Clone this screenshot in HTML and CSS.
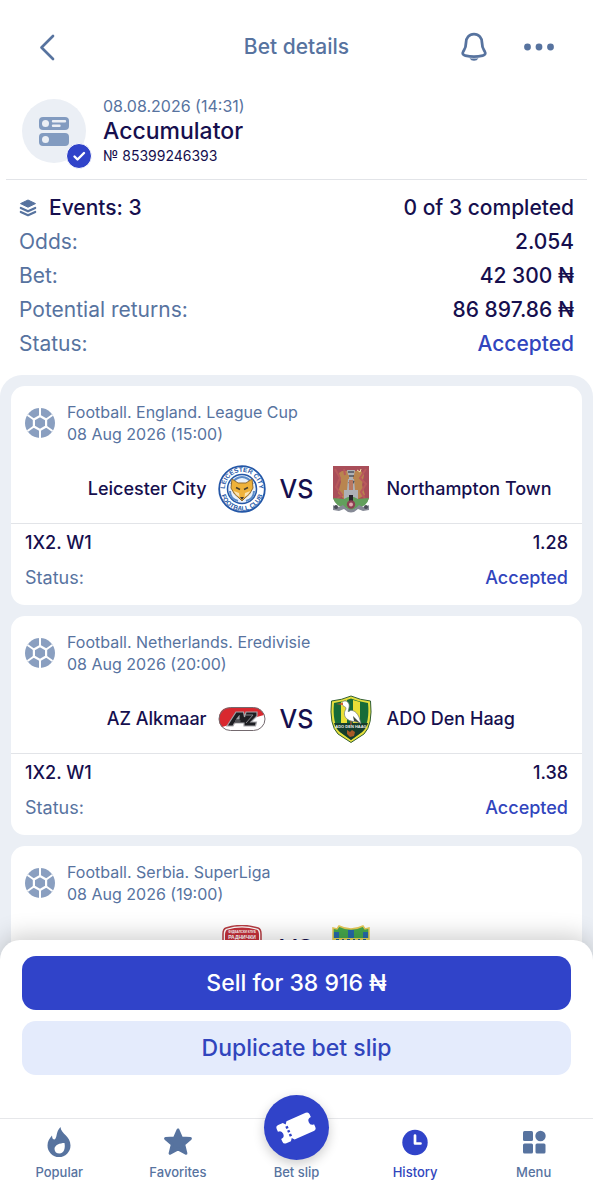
FILE: index.html
```html
<!DOCTYPE html>
<html lang="en">
<head>
<meta charset="utf-8">
<meta name="viewport" content="width=device-width, initial-scale=1">
<title>Bet details</title>
<link rel="stylesheet" href="styles.css">
</head>
<body>
<svg class="defs" aria-hidden="true">
  <symbol id="ball" viewBox="0 0 30 30">
    <circle cx="15" cy="15" r="15" fill="#8a9fc0"/>
    <path d="M15 8 21.100 11.500V18.500L15 22 8.900 18.500V11.500Z" fill="none" stroke="#fff" stroke-width="2.200"/>
    <path d="M15 0V8M15 22V30M21.100 11.500 27.500 7M21.100 18.500 27.500 23M8.900 11.500 2.500 7M8.900 18.500 2.500 23" stroke="#fff" stroke-width="2"/>
  </symbol>
</svg>
<div class="app">
  <header class="topbar">
    <button class="icon-btn" aria-label="Back"><svg width="36" height="36" viewBox="0 0 36 36"><path d="M17 7 5.500 18.500 17 30" fill="none" stroke="#57739f" stroke-width="2.700" stroke-linecap="round" stroke-linejoin="round"/></svg></button>
    <h1 class="title">Bet details</h1>
    <div class="actions">
      <button class="icon-btn" aria-label="Notifications"><svg width="36" height="36" viewBox="0 0 36 36"><path d="M18 5.200c-5 0-8 3.800-8 8.500 0 5-1.200 6.200-2.700 8.700-1.300 2.200-.3 3.700 2 4.200 5.200 1.200 12.200 1.200 17.400 0 2.300-.5 3.300-2 2-4.200-1.500-2.500-2.700-3.700-2.700-8.700 0-4.700-3-8.500-8-8.500Z" fill="none" stroke="#57739f" stroke-width="2.800"/><path d="M13.500 29.200q4.500.7 9 0Q21 31.800 18 31.800T13.500 29.200Z" fill="#57739f"/></svg></button>
      <button class="icon-btn" aria-label="More"><svg width="36" height="36" viewBox="0 0 36 36" fill="#57739f"><circle cx="6.500" cy="18" r="3.400"/><circle cx="18" cy="18" r="3.400"/><circle cx="29.500" cy="18" r="3.400"/></svg></button>
    </div>
  </header>

  <main class="scroll">
    <section class="bet">
      <div class="avatar">
        <svg width="30" height="30" viewBox="0 0 30 30"><rect y="1" width="30" height="13" rx="4" fill="#829bc0"/><rect y="17" width="30" height="13" rx="4" fill="#829bc0"/><circle cx="6.500" cy="7.500" r="3.500" fill="#ebeff5"/><circle cx="6.500" cy="23.500" r="3.500" fill="#ebeff5"/><path d="M14 5.300H26M14 9.700H20.500" stroke="#ebeff5" stroke-width="2.400" stroke-linecap="round"/></svg>
        <svg class="check" width="26" height="26" viewBox="0 0 26 26"><circle cx="13" cy="13" r="12.500" fill="#3043c9" stroke="#fff"/><path d="m8.500 13.500 3 3L18 10" fill="none" stroke="#fff" stroke-width="2.400" stroke-linecap="round" stroke-linejoin="round"/></svg>
      </div>
      <div>
        <p class="bet-date">08.08.2026 (14:31)</p>
        <h2 class="bet-type">Accumulator</h2>
        <p class="bet-no">№ 85399246393</p>
      </div>
    </section>

    <dl class="summary">
      <div class="row"><dt class="events"><svg width="18" height="18" viewBox="0 0 18 18"><path d="M9 1 16.500 4.600 9 8.200 1.500 4.600Z" fill="#57739f" stroke="#57739f" stroke-linejoin="round"/><path d="M1.800 9 9 12.300 16.200 9M1.800 12.900 9 16.200 16.200 12.900" fill="none" stroke="#57739f" stroke-width="2.200" stroke-linecap="round" stroke-linejoin="round"/></svg>Events: 3</dt><dd>0 of 3 completed</dd></div>
      <div class="row"><dt>Odds:</dt><dd>2.054</dd></div>
      <div class="row"><dt>Bet:</dt><dd>42 300 ₦</dd></div>
      <div class="row"><dt>Potential returns:</dt><dd>86 897.86 ₦</dd></div>
      <div class="row"><dt>Status:</dt><dd class="accepted">Accepted</dd></div>
    </dl>

    <section class="events-list">
      <article class="card">
        <header class="league">
          <svg width="30" height="30"><use href="#ball"/></svg>
          <div><p>Football. England. League Cup</p><p>08 Aug 2026 (15:00)</p></div>
        </header>
        <div class="match">
          <div class="team home"><span>Leicester City</span>
            <svg width="48" height="48" viewBox="0 0 48 48">
              <defs><path id="ring-top" d="M7.500 28A17 17 0 1 1 40.500 28"/><path id="ring-bottom" d="M2.500 21A21.700 21.700 0 1 0 45.500 21"/></defs>
              <circle cx="24" cy="24" r="22.800" fill="#fff" stroke="#2457a7" stroke-width="1.800"/>
              <circle cx="24" cy="24" r="14.500" fill="#eaf1fa" stroke="#2457a7" stroke-width="1.500"/>
              <path d="M13 19Q18 12 24 12T35 19M12 26Q12 34 20 36M36 26Q36 34 28 36" fill="none" stroke="#5b8bc8" stroke-width="2"/>
              <path d="M14 14 20 18H28L34 14 35 23 31.500 29 27 33 24 36 21 33 16.500 29 13 23Z" fill="#efb23b" stroke="#926d34"/>
              <path d="m15.500 26 5.500 2 .5 4-3-2ZM32.500 26l-5.500 2-.5 4 3-2Z" fill="#f9e3b3"/><path d="m18 22.500 4 2M30 22.500l-4 2" stroke="#49402e" stroke-width="1.500"/><path d="M22 32h4l-2 3Z" fill="#403a35"/>
              <g class="crest-text" fill="#2457a7"><text font-size="6.500"><textPath href="#ring-top" startOffset="50%" text-anchor="middle">LEICESTER CITY</textPath></text><text font-size="6.500"><textPath href="#ring-bottom" startOffset="50%" text-anchor="middle">FOOTBALL CLUB</textPath></text></g>
            </svg></div>
          <span class="vs">VS</span>
          <div class="team away">
            <svg width="48" height="48" viewBox="0 0 48 48">
              <path d="M6 1H42V33Q40 40 30 42L24 44 18 42Q8 40 6 33Z" fill="#a94e59"/>
              <path d="M15 6H34L37 10 35 20 38 30 31 34H17L11 28 14 17 12 8Z" fill="#b9854f"/>
              <path d="M8 4 13 13 9 22 15 30 10 34M39 4 33 13 39 19 34 27 38 34M17 4 18 10" stroke="#b95a5c" stroke-width="2" fill="none"/>
              <path d="M20 5H28L27 10H26V14H22V10H21ZM21 14H27L28 25H31V35H17V25H20Z" fill="#aeb1b6"/>
              <path d="M21 7H27M22 11H27M22 17 24 21 27 16" stroke="#4e535d" stroke-width="1.500" fill="none"/><path d="M22 15h4v10h-4Z" fill="#b87862"/><path d="m30 5 3 2 1-3" stroke="#f1e2a5" fill="none"/>
              <path d="M6 33 17 34Q24 29 31 34L42 33Q40 42 30 43L24 46 18 43Q9 42 6 33Z" fill="#629f5c"/>
              <path d="M6 40Q10 44 16 40Q24 49 32 40Q38 44 42 40V45L36 46 31 44Q24 51 17 44L12 46 6 45Z" fill="#868a96"/>
              <path d="M22 30h4v6h-4Z" fill="#27242c"/><circle cx="24" cy="39.500" r="4.200" fill="#8c4052"/><circle cx="24" cy="39.500" r="2" fill="#e1a8af"/><circle cx="9" cy="42" r="2" fill="#4a4c57"/><circle cx="39" cy="42" r="2" fill="#4a4c57"/>
            </svg>
            <span>Northampton Town</span></div>
        </div>
        <dl class="market">
          <div class="row"><dt class="pick">1X2. W1</dt><dd>1.28</dd></div>
          <div class="row"><dt>Status:</dt><dd class="accepted">Accepted</dd></div>
        </dl>
      </article>

      <article class="card">
        <header class="league">
          <svg width="30" height="30"><use href="#ball"/></svg>
          <div><p>Football. Netherlands. Eredivisie</p><p>08 Aug 2026 (20:00)</p></div>
        </header>
        <div class="match">
          <div class="team home"><span>AZ Alkmaar</span>
            <svg width="48" height="48" viewBox="0 0 48 48">
              <rect x="1" y="12.500" width="46" height="23" rx="11.500" fill="#fff"/>
              <path d="M12.500 12.500H35.500Q43 12.500 46 20L4 32Q1 29 1 24 1 12.500 12.500 12.500Z" fill="#d9282f"/>
              <rect x="1" y="12.500" width="46" height="23" rx="11.500" fill="none" stroke="#73696e"/>
              <path d="M9 31 18 17H25.500L26.500 22 28 17H39V21L33 27H38.500L37.500 31H26V28H16.500L15 31ZM19 24H21V21.500Z" fill="#1d1e22" fill-rule="evenodd" stroke="#a5a5aa" stroke-width="1.200"/>
              <path d="M17 26H22.500M28 20H35L28 28" fill="none" stroke="#858589" stroke-width="1"/>
            </svg></div>
          <span class="vs">VS</span>
          <div class="team away">
            <svg width="48" height="48" viewBox="0 0 48 48">
              <path d="M4.500 6Q15 5 24 1 33 5 43.500 6 46 30 37 39L24 47.500 11 39Q2 30 4.500 6Z" fill="#e6df3d" stroke="#315f34"/>
              <path d="M7 8Q16 7 24 3.500 32 7 41 8 43 28 35 37L24 45 13 37Q5 28 7 8Z" fill="#176b38"/>
              <path d="M14 7 20 5V29H14ZM26 5 33 7V29H26Z" fill="#eadf36"/>
              <path d="M7 28H41Q39 34 35 37L24 45 13 37Q9 34 7 28Z" fill="#153d2c"/>
              <path d="M21.500 8C19 4.500 14.500 6 15 9 15.500 12 19.500 11 19 14 17 17 16.500 21 20 24 23 26.500 27 26.500 31 27L34 28.500 32 22C29 15 23 14 21.500 17 20.500 15 23.500 12 21.500 8Z" fill="#fff" stroke="#707a77" stroke-width=".7"/>
              <path d="M16 8 9 9 16 10Z" fill="#d6532b"/><path d="m26 21 7 7-6-2Z" fill="#3b4942"/><path d="M24 26v4" stroke="#c85331"/>
              <text class="crest-text" x="24" y="33" text-anchor="middle" font-size="4" fill="#eee">ADO DEN HAAG</text>
              <path d="M20 35 23 37 25 35 28 37 27 41 23 42 20 39Z" fill="#a85a27"/>
            </svg>
            <span>ADO Den Haag</span></div>
        </div>
        <dl class="market">
          <div class="row"><dt class="pick">1X2. W1</dt><dd>1.38</dd></div>
          <div class="row"><dt>Status:</dt><dd class="accepted">Accepted</dd></div>
        </dl>
      </article>

      <article class="card">
        <header class="league">
          <svg width="30" height="30"><use href="#ball"/></svg>
          <div><p>Football. Serbia. SuperLiga</p><p>08 Aug 2026 (19:00)</p></div>
        </header>
        <div class="match">
          <div class="team home">
            <svg width="48" height="48" viewBox="0 0 48 48">
              <path d="M8 3Q24-2 40 3 43 4 43 9V26Q42 39 24 47 6 39 5 26V9Q5 4 8 3Z" fill="#fff" stroke="#b73d43" stroke-width="1.500"/>
              <path d="M9 4.800Q24 0 39 4.800 41 6 41 10V25Q40 37 24 45 8 37 7 25V10Q7 6 9 4.800Z" fill="#c5303a"/>
              <g class="crest-text" fill="#fff" text-anchor="middle"><text x="24" y="7.500" font-size="3">ФУДБАЛСКИ КЛУБ</text><text x="24" y="13.500" font-size="5">РАДНИЧКИ</text></g>
            </svg></div>
          <span class="vs">VS</span>
          <div class="team away">
            <svg width="48" height="48" viewBox="0 0 48 48">
              <path d="M12 1Q18 4 24 4T36 1L38 4 42 3V34L24 46 6 34V3L10 4Z" fill="#46a84c" stroke="#e7ca58" stroke-width="1.500"/>
              <path d="M7 7H12V13H7ZM21 5H27V13H21ZM36 7H41V13H36Z" fill="#276aa9"/>
              <path d="M6 13H42V34L24 46 6 34Z" fill="#e7d557"/><path d="M9 15H12M15 15H17M20 15H23M26 15H28M31 15H33M36 15H39" stroke="#245f91" stroke-width="2"/>
            </svg></div>
        </div>
      </article>
    </section>
  </main>

  <footer class="dock">
    <div class="cta">
      <button class="btn primary">Sell for 38 916 ₦</button>
      <button class="btn secondary">Duplicate bet slip</button>
    </div>
    <nav class="tabs">
      <a class="tab" href="#popular"><svg width="30" height="30" viewBox="0 0 30 30"><path d="M16.500 0C17 7 26.500 9 26.500 18.500A11.500 11.500 0 0 1 3.500 18.500C3.500 14 5.500 11.500 8 8.500 8.200 11.500 9 12.500 10.500 12.500 13.500 11 11.500 5 16.500 0ZM20.500 16C16 16 10.500 18 10.500 22A5 5 0 0 0 15.500 26.500C20 26.500 21.500 21 20.500 16Z" fill="#57739f" fill-rule="evenodd"/></svg>Popular</a>
      <a class="tab" href="#favorites"><svg width="30" height="30" viewBox="0 0 30 30"><path d="M15 3 18.400 10.900 27.400 11.500 20.700 17.400 22.900 26.300 15 21.900 7.100 26.300 9.300 17.400 2.600 11.500 11.600 10.900Z" fill="#57739f" stroke="#57739f" stroke-width="3" stroke-linejoin="round"/></svg>Favorites</a>
      <a class="tab slip" href="#slip"><span class="disc"><svg width="44" height="44" viewBox="0 0 44 44"><g transform="rotate(-24 22 22)"><path d="M7 12H12L14 14.500 16 12H37Q40 12 40 15V18A4 4 0 0 0 40 26V29Q40 32 37 32H16L14 29.500 12 32H7Q4 32 4 29V26A4 4 0 0 0 4 18V15Q4 12 7 12Z" fill="#fff"/><path d="M14 16.500V19M14 20.800V23.200M14 25V27.500" stroke="#3043c9" stroke-width="2.500"/></g></svg></span>Bet slip</a>
      <a class="tab active" href="#history" aria-current="page"><svg width="30" height="30" viewBox="0 0 30 30"><circle cx="15" cy="15.500" r="12.700" fill="#3043c9"/><path d="M15 8.500V16.500H20.500" fill="none" stroke="#fff" stroke-width="2.700" stroke-linecap="round" stroke-linejoin="round"/></svg>History</a>
      <a class="tab" href="#menu"><svg width="30" height="30" viewBox="0 0 30 30" fill="#57739f"><rect x="4" y="4" width="10" height="10" rx="1.500"/><circle cx="21.500" cy="9" r="5.200"/><rect x="4" y="16.500" width="10" height="10" rx="1.500"/><rect x="16.500" y="16.500" width="10" height="10" rx="1.500"/></svg>Menu</a>
    </nav>
  </footer>
</div>
</body>
</html>
```
FILE: styles.css
```css
* { box-sizing: border-box; }
body, h1, h2, p, dl, dd { margin: 0; }
body {
  background: #fff;
  color: #160f4e;
  font-family: Inter, "Liberation Sans", sans-serif;
}
button { font: inherit; border: 0; padding: 0; background: none; cursor: pointer; }
svg { display: block; flex: none; }
.defs { width: 0; height: 0; position: absolute; }
.app { height: 100vh; display: flex; flex-direction: column; }

.topbar {
  display: grid;
  grid-template-columns: 1fr auto 1fr;
  align-items: center;
  height: 94px;
  padding: 0 36px;
  flex: none;
}
.topbar > .icon-btn { justify-self: start; }
.title { font-size: 21px; line-height: 28px; font-weight: 500; color: #57739f; }
.actions { display: flex; justify-content: flex-end; gap: 29px; }

.scroll { flex: 1; min-height: 0; overflow-y: auto; scrollbar-width: none; }
.bet {
  display: flex;
  align-items: center;
  gap: 17px;
  margin: 0 6px;
  padding: 2px 16px 13px;
  border-bottom: 1px solid #e2e4e8;
}
.avatar {
  position: relative;
  display: grid;
  place-items: center;
  width: 64px;
  height: 64px;
  border-radius: 50%;
  background: #ebeff5;
}
.check { position: absolute; right: -6px; bottom: -6px; }
.bet-date { font-size: 16px; line-height: 20px; color: #57739f; }
.bet-type { font-size: 23px; line-height: 30px; font-weight: 500; }
.bet-no { font-size: 14px; line-height: 20px; }

.summary { padding: 11px 19px 14px; font-size: 21px; line-height: 34px; }
.row { display: flex; justify-content: space-between; }
.row dt { color: #57739f; }
.row dd { font-weight: 500; }
.row .events, .row .pick { color: #160f4e; font-weight: 500; }
.row .accepted { color: #3145bd; }
.events { display: flex; align-items: center; gap: 12px; }

.events-list {
  display: grid;
  gap: 11px;
  padding: 11px;
  border-radius: 22px 22px 0 0;
  background: #ebeff5;
}
.card { background: #fff; border-radius: 14px; }
.league {
  display: flex;
  align-items: center;
  gap: 12px;
  padding: 15px 14px 20px;
  font-size: 16px;
  line-height: 22px;
  color: #57739f;
}
.match {
  display: grid;
  grid-template-columns: 1fr auto 1fr;
  align-items: center;
  gap: 14px;
  padding: 0 8px 10px;
  border-bottom: 1px solid #e2e4e8;
}
.team { display: flex; align-items: center; gap: 11px; font-size: 18px; line-height: 24px; font-weight: 500; }
.home { justify-content: flex-end; }
.vs { font-size: 25px; line-height: 32px; font-weight: 500; }
.crest-text { font-family: "Liberation Sans", sans-serif; font-weight: 700; }
.market { padding: 1px 14px 10px; font-size: 18px; line-height: 35px; }

.dock {
  position: relative;
  flex: none;
  margin-top: -20px;
  border-radius: 20px 20px 0 0;
  background: #fff;
  box-shadow: 0 -4px 24px rgba(0, 0, 0, 0.2);
}
.cta { display: grid; gap: 11px; padding: 16px 22px 43px; }
.btn { height: 54px; border-radius: 14px; font-size: 23px; font-weight: 500; }
.primary { background: #3043c9; color: #fff; }
.secondary { background: #e4ebfc; color: #3145bd; }
.tabs {
  display: grid;
  grid-template-columns: repeat(5, 1fr);
  height: 82px;
  padding-bottom: 18px;
  border-top: 1px solid #e6e7ea;
}
.tab {
  display: flex;
  flex-direction: column;
  justify-content: flex-end;
  align-items: center;
  gap: 5px;
  font-size: 13px;
  line-height: 20px;
  font-weight: 500;
  color: #57739f;
  text-decoration: none;
}
.active { color: #3145bd; }
.slip { gap: 2px; }
.disc {
  display: grid;
  place-items: center;
  flex: none;
  width: 65px;
  height: 65px;
  margin-top: -24px;
  border-radius: 50%;
  background: #3043c9;
  box-shadow: 0 4px 12px rgba(0, 0, 0, 0.2);
}
```
